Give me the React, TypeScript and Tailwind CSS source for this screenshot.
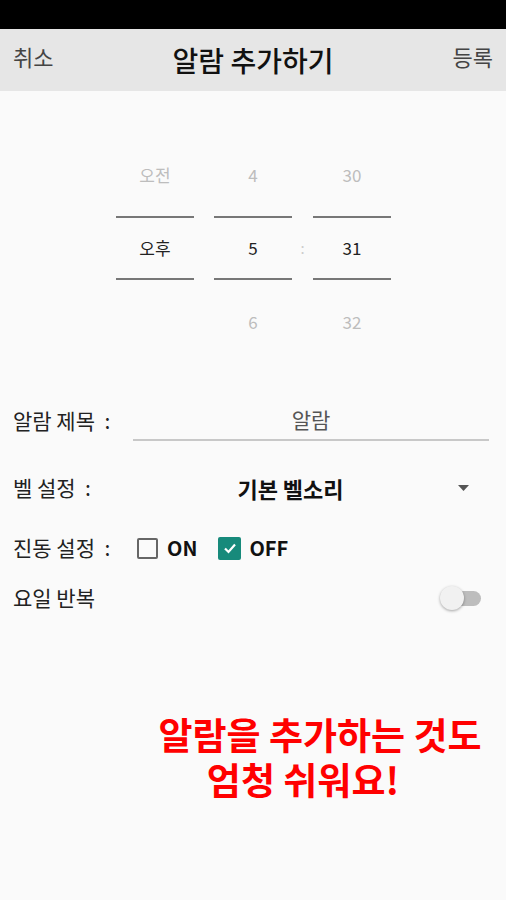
const FONT = { fontFamily: '"Noto Sans CJK KR", "Noto Sans", sans-serif' };

function PickerColumn({ top, mid, bottom }: { top: string; mid: string; bottom: string }) {
  return (
    <div className="flex w-[78px] flex-col">
      <div className="flex h-[62px] items-center justify-center text-[17px] text-[#bdbdbd]">{top}</div>
      <div className="h-[10px]" />
      <div className="h-[2px] bg-[#777]" />
      <div className="flex h-[60px] items-center justify-center text-[17px] text-[#222]">{mid}</div>
      <div className="h-[2px] bg-[#777]" />
      <div className="h-[11px]" />
      <div className="flex h-[62px] items-center justify-center text-[17px] text-[#bdbdbd]">{bottom}</div>
    </div>
  );
}

export default function App() {
  return (
    <div className="flex h-[900px] w-[506px] flex-col bg-[#fafafa]" style={FONT}>
      <div className="h-[29px] bg-black" />
      <div className="relative flex h-[62px] items-center justify-between bg-[#e6e6e6] px-[13px]">
        <span className="-mt-[8px] text-[22px] text-[#444]">취소</span>
        <span className="text-[28px] font-medium text-[#111]">알람 추가하기</span>
        <span className="-mt-[8px] text-[22px] text-[#444]">등록</span>
      </div>

      <div className="mt-[53px] flex pl-[116px]">
        <PickerColumn top="오전" mid="오후" bottom="" />
        <div className="w-[20px]" />
        <PickerColumn top="4" mid="5" bottom="6" />
        <div className="flex w-[21px] flex-col">
          <div className="h-[74px]" />
          <div className="flex h-[60px] items-center justify-center text-[15px] text-[#ccc]">:</div>
        </div>
        <PickerColumn top="30" mid="31" bottom="32" />
      </div>

      <div className="mt-[48px] flex h-[40px] items-center pl-[13px] pr-[17px]">
        <span className="w-[120px] text-[21px] text-[#222]">알람 제목 &nbsp;:</span>
        <div className="flex h-[40px] flex-1 flex-col">
          <div className="flex flex-1 items-center justify-center text-[21px] text-[#555]">알람</div>
          <div className="h-[2px] bg-[#c8c8c8]" />
        </div>
      </div>

      <div className="mt-[27px] flex h-[40px] items-center pl-[13px] pr-[37px]">
        <span className="w-[120px] text-[21px] text-[#222]">벨 설정 &nbsp;:</span>
        <div className="flex flex-1 items-center justify-center pr-[10px] text-[22px] font-bold text-[#111]">기본 벨소리</div>
        <svg width="11" height="6" viewBox="0 0 11 6">
          <path d="M0 0 L11 0 L5.5 6 Z" fill="#555" />
        </svg>
      </div>

      <div className="mt-[20px] flex h-[40px] items-center pl-[13px]">
        <span className="w-[124px] text-[21px] text-[#222]">진동 설정 &nbsp;:</span>
        <div className="h-[21px] w-[21px] rounded-[2px] border-2 border-[#666]" />
        <span className="ml-[9px] text-[20px] font-bold text-[#111]">ON</span>
        <div className="ml-[21px] flex h-[23px] w-[23px] items-center justify-center rounded-[2px] bg-[#178a7b]">
          <svg width="16" height="16" viewBox="0 0 16 16">
            <path d="M3 8.5 L6.5 12 L13 4.5" stroke="white" strokeWidth="2.2" fill="none" />
          </svg>
        </div>
        <span className="ml-[8px] text-[20px] font-bold text-[#111]">OFF</span>
      </div>

      <div className="mt-[10px] flex h-[40px] items-center justify-between pl-[13px] pr-[25px]">
        <span className="text-[21px] text-[#222]">요일 반복</span>
        <div className="relative h-[15px] w-[38px] rounded-full bg-[#bdbdbd]">
          <div className="absolute -left-[3px] -top-[5px] h-[24px] w-[24px] rounded-full bg-[#f1f1f1] shadow-[0_1px_3px_rgba(0,0,0,0.35)]" />
        </div>
      </div>

      <div className="mt-[94px] flex flex-col items-center pl-[134px] text-[37px] font-bold leading-[45px] text-[#ff0000]">
        <span>알람을 추가하는 것도</span>
        <span className="pr-[34px]">엄청 쉬워요!</span>
      </div>
    </div>
  );
}
